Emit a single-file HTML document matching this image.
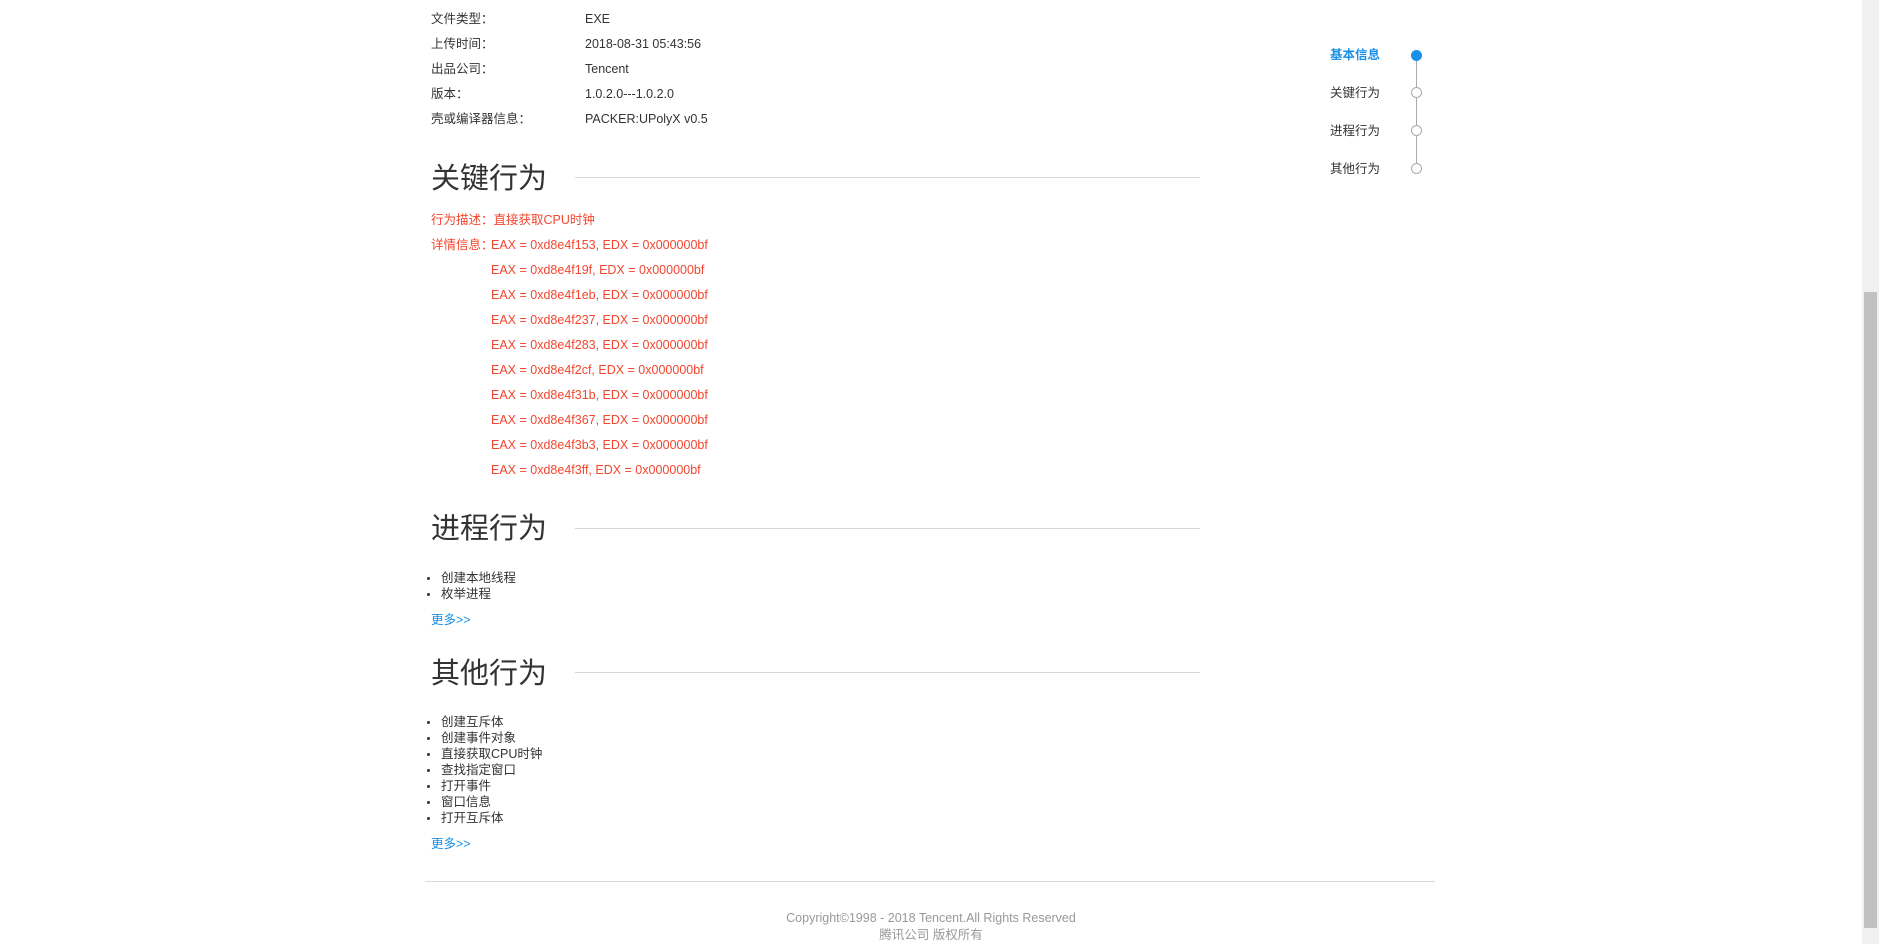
<!DOCTYPE html>
<html><head><meta charset="utf-8"><style>
body{margin:0;width:1879px;height:944px;background:#fff;position:relative;overflow:hidden;font-family:"Liberation Sans","Noto Sans CJK SC",sans-serif;color:#333;font-size:12.5px}
.a{position:absolute;white-space:nowrap;line-height:16px}
.h{position:absolute;font-size:29px;line-height:36px;color:#333}
.ln{position:absolute;height:1px;background:#d9d9d9}
.r{color:#f4452e}
.b{color:#1890e8}
.dot{position:absolute;width:3px;height:3px;border-radius:50%;background:#333}
.c{position:absolute;width:9px;height:9px;border:1px solid #aaa;border-radius:50%;background:#fff;left:1411px}
</style></head><body>
<div class="a" style="left:431px;top:11px">文件类型： </div><div class="a" style="left:585px;top:11px">EXE</div>
<div class="a" style="left:431px;top:36px">上传时间： </div><div class="a" style="left:585px;top:36px">2018-08-31 05:43:56</div>
<div class="a" style="left:431px;top:61px">出品公司： </div><div class="a" style="left:585px;top:61px">Tencent</div>
<div class="a" style="left:431px;top:86px">版本： </div><div class="a" style="left:585px;top:86px">1.0.2.0---1.0.2.0</div>
<div class="a" style="left:431px;top:111px">壳或编译器信息： </div><div class="a" style="left:585px;top:111px">PACKER:UPolyX v0.5</div>

<div class="h" style="left:431px;top:161px">关键行为</div><div class="ln" style="left:575px;width:625px;top:177px"></div>
<div class="a r" style="left:431px;top:212px">行为描述：直接获取CPU时钟</div>
<div class="a r" style="left:431px;top:237px">详情信息：</div>
<div class="a r" style="left:491px;top:237px">EAX = 0xd8e4f153, EDX = 0x000000bf</div>
<div class="a r" style="left:491px;top:262px">EAX = 0xd8e4f19f, EDX = 0x000000bf</div>
<div class="a r" style="left:491px;top:287px">EAX = 0xd8e4f1eb, EDX = 0x000000bf</div>
<div class="a r" style="left:491px;top:312px">EAX = 0xd8e4f237, EDX = 0x000000bf</div>
<div class="a r" style="left:491px;top:337px">EAX = 0xd8e4f283, EDX = 0x000000bf</div>
<div class="a r" style="left:491px;top:362px">EAX = 0xd8e4f2cf, EDX = 0x000000bf</div>
<div class="a r" style="left:491px;top:387px">EAX = 0xd8e4f31b, EDX = 0x000000bf</div>
<div class="a r" style="left:491px;top:412px">EAX = 0xd8e4f367, EDX = 0x000000bf</div>
<div class="a r" style="left:491px;top:437px">EAX = 0xd8e4f3b3, EDX = 0x000000bf</div>
<div class="a r" style="left:491px;top:462px">EAX = 0xd8e4f3ff, EDX = 0x000000bf</div>

<div class="h" style="left:431px;top:511px">进程行为</div><div class="ln" style="left:575px;width:625px;top:528px"></div>
<div class="dot" style="left:427px;top:577px"></div><div class="a" style="left:441px;top:570px">创建本地线程</div>
<div class="dot" style="left:427px;top:593px"></div><div class="a" style="left:441px;top:586px">枚举进程</div>
<div class="a b" style="left:431px;top:612px">更多&gt;&gt;</div>

<div class="h" style="left:431px;top:656px">其他行为</div><div class="ln" style="left:575px;width:625px;top:672px"></div>
<div class="dot" style="left:427px;top:721px"></div><div class="a" style="left:441px;top:714px">创建互斥体</div>
<div class="dot" style="left:427px;top:737px"></div><div class="a" style="left:441px;top:730px">创建事件对象</div>
<div class="dot" style="left:427px;top:753px"></div><div class="a" style="left:441px;top:746px">直接获取CPU时钟</div>
<div class="dot" style="left:427px;top:769px"></div><div class="a" style="left:441px;top:762px">查找指定窗口</div>
<div class="dot" style="left:427px;top:785px"></div><div class="a" style="left:441px;top:778px">打开事件</div>
<div class="dot" style="left:427px;top:801px"></div><div class="a" style="left:441px;top:794px">窗口信息</div>
<div class="dot" style="left:427px;top:817px"></div><div class="a" style="left:441px;top:810px">打开互斥体</div>
<div class="a b" style="left:431px;top:836px">更多&gt;&gt;</div>

<div class="ln" style="left:425px;width:1010px;top:881px"></div>
<div class="a" style="left:0;width:1862px;text-align:center;top:910px;color:#999">Copyright©1998 - 2018 Tencent.All Rights Reserved</div>
<div class="a" style="left:0;width:1862px;text-align:center;top:927px;color:#999">腾讯公司 版权所有</div>

<div style="position:absolute;left:1416px;top:55px;width:1px;height:114px;background:#aaa"></div>
<div class="a b" style="left:1330px;top:47px;font-weight:bold">基本信息</div>
<div class="a" style="left:1330px;top:85px">关键行为</div>
<div class="a" style="left:1330px;top:123px">进程行为</div>
<div class="a" style="left:1330px;top:161px">其他行为</div>
<div class="c" style="top:50px;background:#1890e8;border-color:#1890e8"></div>
<div class="c" style="top:87px"></div>
<div class="c" style="top:125px"></div>
<div class="c" style="top:163px"></div>

<div style="position:absolute;left:1862px;top:0;width:17px;height:944px;background:#f0f0f0"></div>
<div style="position:absolute;left:1864px;top:292px;width:13px;height:636px;background:#c1c1c1"></div>
</body></html>
